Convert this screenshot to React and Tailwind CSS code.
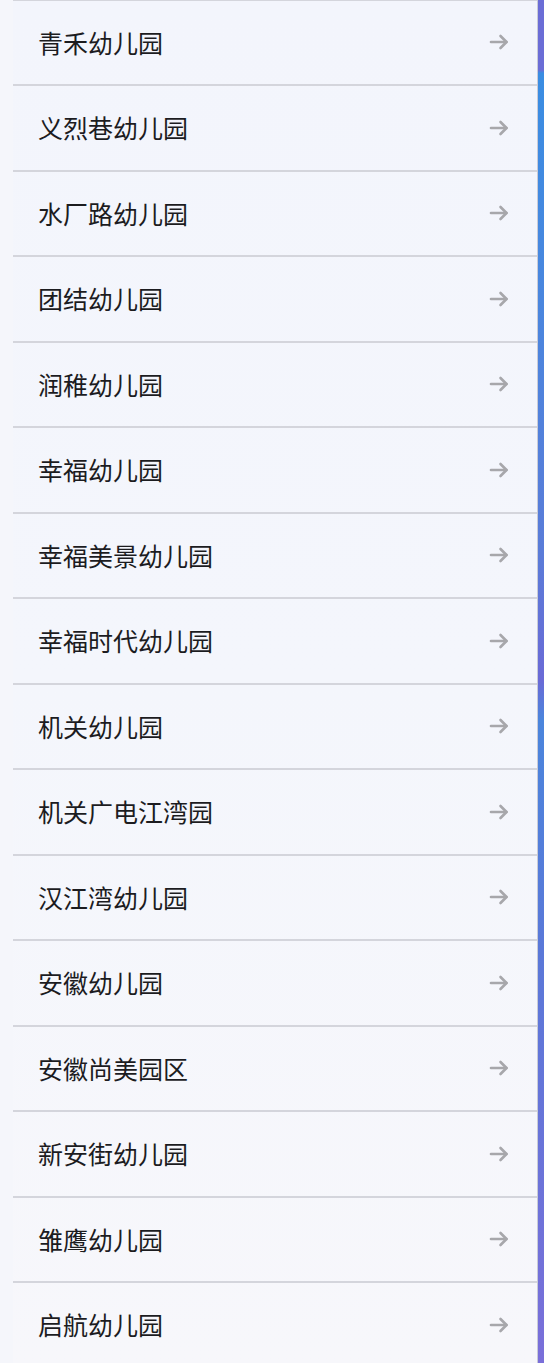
import React from 'react'

const schools = [
  '青禾幼儿园',
  '义烈巷幼儿园',
  '水厂路幼儿园',
  '团结幼儿园',
  '润稚幼儿园',
  '幸福幼儿园',
  '幸福美景幼儿园',
  '幸福时代幼儿园',
  '机关幼儿园',
  '机关广电江湾园',
  '汉江湾幼儿园',
  '安徽幼儿园',
  '安徽尚美园区',
  '新安街幼儿园',
  '雏鹰幼儿园',
  '启航幼儿园',
]

const Arrow = () => (
  <svg width="20" height="16" viewBox="0 0 20 16" fill="none" stroke="#a7a7ab" strokeWidth="2.6" strokeLinecap="round" strokeLinejoin="round">
    <path d="M2 8H17.5" />
    <path d="M11.5 2L17.5 8L11.5 14" />
  </svg>
)

const App = () => {
  return (
    <div className="flex h-[1363px] w-[544px] overflow-hidden bg-[#f5f6fb] font-['Noto_Sans_CJK_SC',sans-serif]">
      {/* list panel */}
      <div className="flex-1 pl-[13px]">
        <div className="-mt-[1.5px] h-[1365px] bg-[linear-gradient(to_bottom,#f3f5fc,#f4f6fc_50%,#f7f7fb)] border-r border-[#c9cbd6]">
          {schools.map((name) => (
            <div
              key={name}
              className="flex h-[85.5px] items-center justify-between border-t-2 border-[#d4d5dc] pl-[25px] pr-[28px]"
            >
              <span className="text-[25px] leading-none text-[#1c1c1f]">{name}</span>
              <Arrow />
            </div>
          ))}
        </div>
      </div>

      {/* edge of the page behind */}
      <div className="w-[6px] shrink-0 bg-[linear-gradient(to_bottom,#6b6dd6_0px,#6b6dd6_70px,#3a8de2_73px,#4a86de_300px,#5a7cd8_550px,#6a6ad6_680px,#4b85dc_720px,#5a78d8_950px,#7a6fd9_1363px)]" />
    </div>
  )
}

export default App
